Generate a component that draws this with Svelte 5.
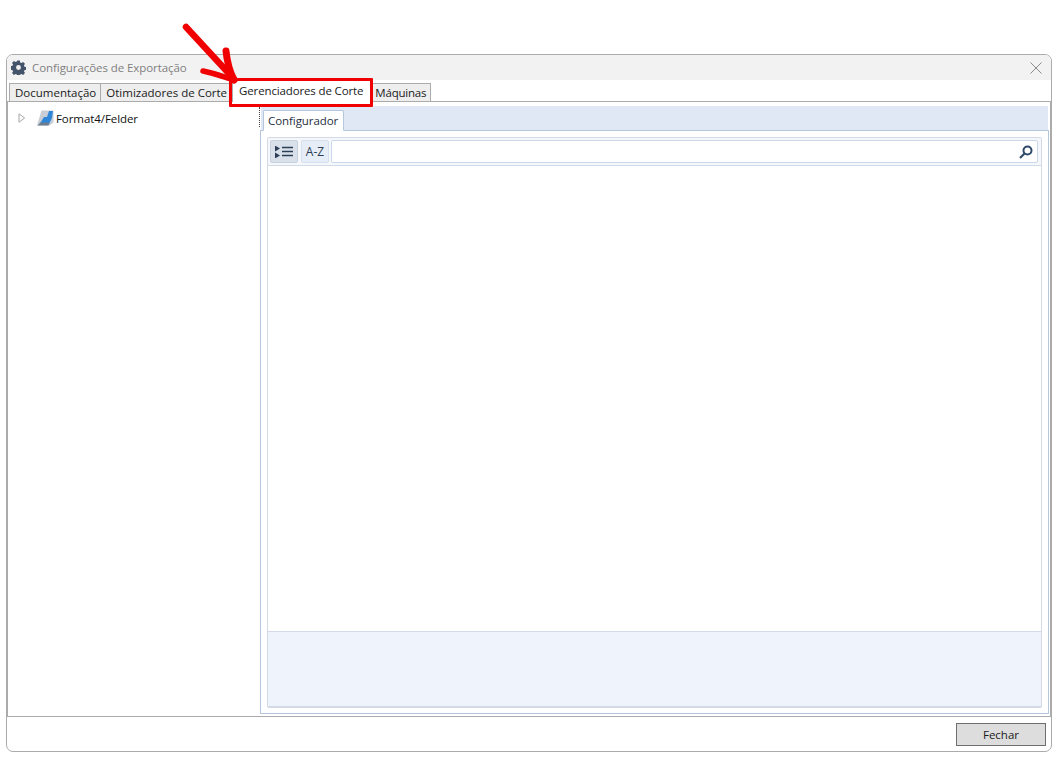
<script lang="ts">
  const tabs = [
    { label: 'Documentação', active: false },
    { label: 'Otimizadores de Corte', active: false },
    { label: 'Gerenciadores de Corte', active: true },
    { label: 'Máquinas', active: false }
  ];
</script>

<div class="page">
  <div class="window">
    <header class="titlebar">
      <svg class="gear" width="15" height="15" viewBox="0 0 16 16">
        <path fill="#44546a" fill-rule="evenodd" d="M6.6 0.6h2.8l.4 2 1.3.6 1.8-1.1 2 2-1.1 1.8.6 1.3 2 .4v2.8l-2 .4-.6 1.3 1.1 1.8-2 2-1.8-1.1-1.3.6-.4 2H6.6l-.4-2-1.3-.6-1.8 1.1-2-2 1.1-1.8-.6-1.3-2-.4V6.6l2-.4.6-1.3-1.1-1.8 2-2 1.8 1.1 1.3-.6zM8 5.4a2.6 2.6 0 1 0 0 5.2 2.6 2.6 0 0 0 0-5.2z"/>
      </svg>
      <span class="title">Configurações de Exportação</span>
      <svg class="close" width="12" height="12" viewBox="0 0 12 12">
        <path d="M.5.5l11 11M11.5.5l-11 11" stroke="#8a8a8a" stroke-width="1" fill="none"/>
      </svg>
    </header>

    <nav class="tabs">
      {#each tabs as tab}
        <div class="tab" class:active={tab.active}>{tab.label}</div>
      {/each}
    </nav>

    <main class="content">
      <aside class="tree">
        <div class="tree-row">
          <svg class="expander" width="8" height="10" viewBox="0 0 8 10">
            <path d="M1 .8l5.6 4.2L1 9.2z" fill="#fff" stroke="#a6a6a6"/>
          </svg>
          <svg class="machine" width="17" height="16" viewBox="0 0 17 16">
            <path d="M0 15.5L4.5.5h12v12l-4 3z" fill="#c9ced6"/>
            <path d="M2 15l5-8h3l2-6h4l-1 7-3 6z" fill="#2f86d8"/>
            <path d="M.5 15.5l3-3h9l-1 3z" fill="#6d7c8f"/>
          </svg>
          <span>Format4/Felder</span>
        </div>
      </aside>

      <div class="splitter"></div>

      <section class="panel">
        <div class="panel-tabs">
          <div class="panel-tab">Configurador</div>
        </div>
        <div class="panel-body">
          <div class="grid">
            <div class="toolbar">
              <button class="tool selected" title="Categorizado">
                <svg width="18" height="12" viewBox="0 0 18 12">
                  <path d="M0 0l5 3-5 3zM0 7l5 3-5 3z" fill="#2b3e55" transform="translate(0 -.5)"/>
                  <path d="M7 1.5h11M7 5.5h11M7 9.5h11" stroke="#2b3e55" stroke-width="1.3"/>
                </svg>
              </button>
              <button class="tool">A-Z</button>
              <div class="search">
                <svg width="14" height="14" viewBox="0 0 14 14">
                  <circle cx="8.5" cy="5.5" r="4" fill="none" stroke="#2f4a68" stroke-width="2"/>
                  <path d="M5.5 8.5L1 13" stroke="#2f4a68" stroke-width="2.2"/>
                </svg>
              </div>
            </div>
            <div class="properties"></div>
            <div class="description"></div>
          </div>
        </div>
      </section>
    </main>

    <footer class="footer">
      <button class="close-btn">Fechar</button>
    </footer>
  </div>

  <!-- marcacao vermelha por cima da captura -->
  <div class="highlight"></div>
  <svg class="arrow" width="70" height="70" viewBox="0 0 70 70">
    <path d="M4 5L52 57" stroke="#f00000" stroke-width="6.5" stroke-linecap="round" fill="none"/>
    <path d="M44 29C45 39 47 48 52 58" stroke="#f00000" stroke-width="7" stroke-linecap="round" fill="none"/>
    <path d="M52 58C42 55 32 51 21 49" stroke="#f00000" stroke-width="5.5" stroke-linecap="round" fill="none"/>
  </svg>
</div>

<style>
  :global(body) {
    margin: 0;
    background: #fff;
  }

  .page {
    position: relative;
    width: 1059px;
    height: 759px;
    padding: 54px 7px 7px 6px;
    box-sizing: border-box;
    font-family: "Open Sans", "Noto Sans", sans-serif;
    font-size: 11.5px;
    color: #1a1a1a;
  }

  .window {
    display: flex;
    flex-direction: column;
    height: 100%;
    box-sizing: border-box;
    border: 1px solid #ababab;
    border-radius: 7px;
    overflow: hidden;
    background: #fff;
  }

  .titlebar {
    display: flex;
    align-items: center;
    flex: none;
    height: 25px;
    padding: 0 9px 0 4px;
    background: #f2f2f2;
  }

  .gear {
    margin-right: 6px;
  }

  .title {
    flex: 1;
    color: #808080;
    letter-spacing: -0.07px;
  }

  .tabs {
    display: flex;
    flex: none;
    height: 21px;
    align-items: flex-end;
    padding-left: 2px;
    border-bottom: 1px solid #ababab;
  }

  .tab {
    height: 19px;
    box-sizing: border-box;
    padding: 1px 4px 0 5px;
    margin-bottom: -1px;
    border: 1px solid #ababab;
    background: #eeeeee;
    white-space: nowrap;
  }

  .tab + .tab {
    border-left: none;
  }

  .tab.active {
    height: 22px;
    padding: 0 8px 0 6px;
    background: #fff;
    border: none;
    letter-spacing: -0.14px;
    line-height: 22px;
  }

  .tab:nth-child(2) {
    padding-right: 5px;
  }

  .tab:last-child {
    padding: 1px 4px 0 3px;
    border-left: 1px solid #ababab;
    letter-spacing: -0.2px;
  }

  .content {
    display: flex;
    flex: 1;
    min-height: 0;
    border-left: 1px solid #ababab;
    border-right: 1px solid #ababab;
    border-bottom: 1px solid #ababab;
  }

  .tree {
    flex: none;
    width: 251px;
    padding-top: 7px;
  }

  .tree-row {
    display: flex;
    align-items: center;
    height: 18px;
    padding-left: 10px;
    color: #111;
    letter-spacing: -0.07px;
  }

  .expander {
    margin-right: 11px;
  }

  .machine {
    margin-right: 2px;
  }

  .splitter {
    flex: none;
    width: 0;
    height: 20px;
    margin-top: 5px;
    border-left: 1px dotted #444;
  }

  .panel {
    display: flex;
    flex-direction: column;
    flex: 1;
    min-width: 0;
    padding-top: 4px;
    padding-bottom: 2px;
    margin-right: 1px;
  }

  .panel-tabs {
    display: flex;
    flex: none;
    height: 24px;
    margin: 0 1px;
    padding-left: 2px;
    background: #dfe8f4;
    align-items: flex-end;
  }

  .panel-tab {
    height: 21px;
    box-sizing: border-box;
    padding: 2px 5px 0 4px;
    background: #fff;
    border: 1px solid #b5c7dd;
    border-bottom-color: #fff;
    border-radius: 2px 2px 0 0;
    color: #1f2f42;
    letter-spacing: -0.07px;
    position: relative;
    margin-bottom: -1px;
  }

  .panel-body {
    flex: 1;
    display: flex;
    min-height: 0;
    padding: 6px 6px 5px 6px;
    border: 1px solid #b5c7dd;
  }

  .grid {
    display: flex;
    flex-direction: column;
    flex: 1;
    min-width: 0;
    border: 1px solid #d3dae5;
    border-bottom-width: 2px;
    border-radius: 2px;
  }

  .toolbar {
    display: flex;
    flex: none;
    gap: 3px;
    height: 28px;
    box-sizing: border-box;
    padding: 2px 3px 2px 2px;
    border-bottom: 1px solid #cfdbe9;
    background: #f5f7fb;
  }

  .tool {
    display: flex;
    align-items: center;
    justify-content: center;
    width: 28px;
    padding: 0;
    border: 1px solid #d5e0ee;
    border-radius: 2px;
    background: #e6edf7;
    font: inherit;
    font-size: 12px;
    color: #2b3e55;
  }

  .tool.selected {
    background: #d9e0ea;
    border-color: #c8d2df;
  }

  .search {
    display: flex;
    align-items: center;
    justify-content: flex-end;
    flex: 1;
    margin-left: -1px;
    padding-right: 4px;
    background: #fff;
    border: 1px solid #c9d8ea;
    border-radius: 2px;
  }

  .properties {
    flex: 1;
    background: #fff;
  }

  .description {
    flex: none;
    height: 74px;
    background: #eff3fb;
    border-top: 1px solid #d3dae5;
  }

  .footer {
    display: flex;
    flex: none;
    justify-content: flex-end;
    align-items: flex-start;
    height: 34px;
    padding: 6px 5px 0 0;
    box-sizing: border-box;
  }

  .close-btn {
    width: 90px;
    height: 23px;
    padding: 0;
    background: #dddddd;
    border: 1px solid #6e6e6e;
    font: inherit;
    color: #1a1a1a;
  }

  .highlight {
    position: absolute;
    left: 229px;
    top: 78px;
    width: 138px;
    height: 23px;
    border: 3px solid #f00000;
    border-radius: 1px;
  }

  .arrow {
    position: absolute;
    left: 182px;
    top: 22px;
  }
</style>
